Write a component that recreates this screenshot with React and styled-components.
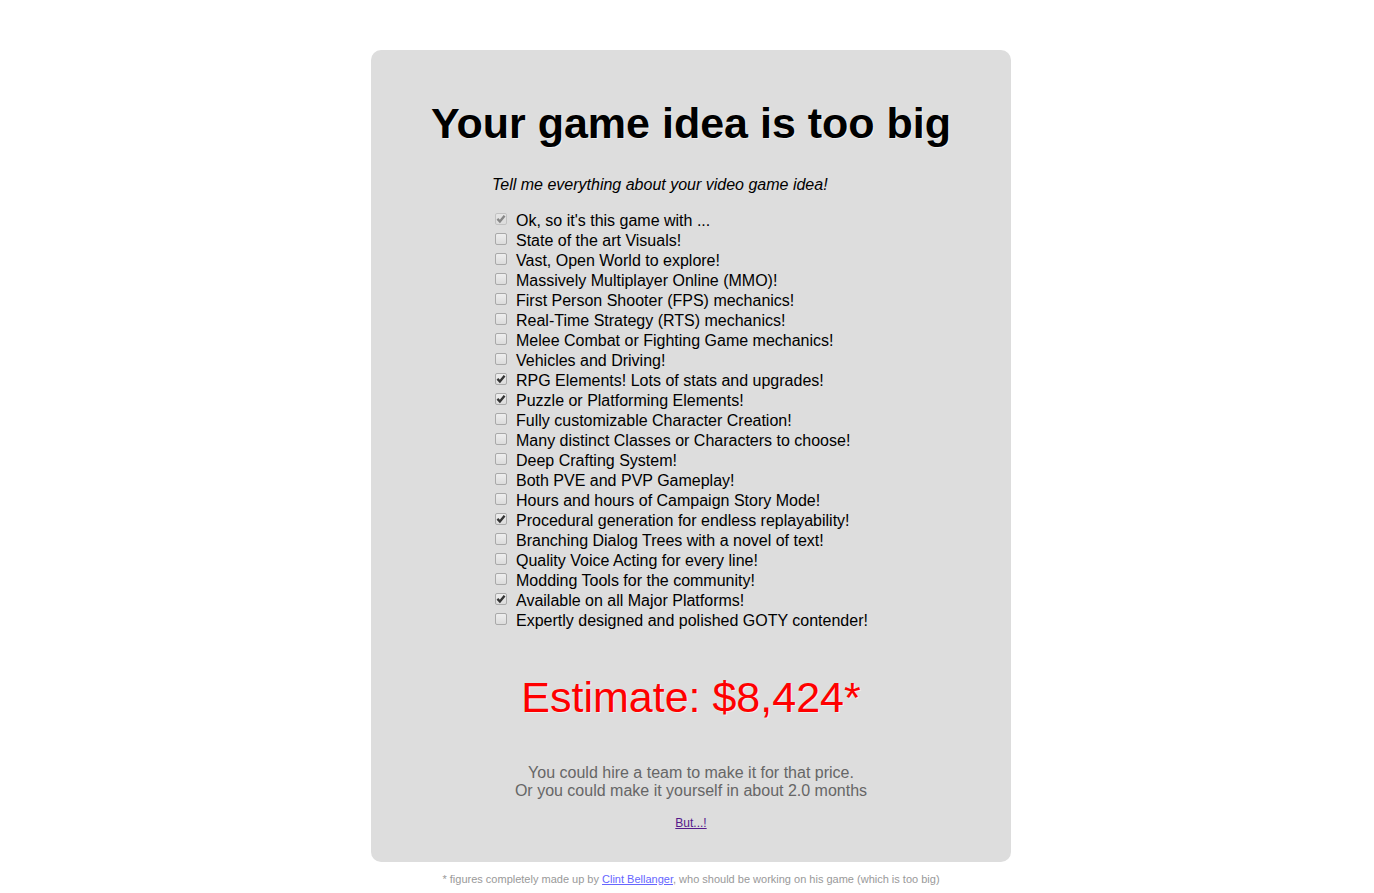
import React, { useState } from "react";
import styled, { createGlobalStyle } from "styled-components";

const features = [
  { text: "Ok, so it's this game with ...", on: true, locked: true },
  { text: "State of the art Visuals!" },
  { text: "Vast, Open World to explore!" },
  { text: "Massively Multiplayer Online (MMO)!" },
  { text: "First Person Shooter (FPS) mechanics!" },
  { text: "Real-Time Strategy (RTS) mechanics!" },
  { text: "Melee Combat or Fighting Game mechanics!" },
  { text: "Vehicles and Driving!" },
  { text: "RPG Elements! Lots of stats and upgrades!", on: true },
  { text: "Puzzle or Platforming Elements!", on: true },
  { text: "Fully customizable Character Creation!" },
  { text: "Many distinct Classes or Characters to choose!" },
  { text: "Deep Crafting System!" },
  { text: "Both PVE and PVP Gameplay!" },
  { text: "Hours and hours of Campaign Story Mode!" },
  { text: "Procedural generation for endless replayability!", on: true },
  { text: "Branching Dialog Trees with a novel of text!" },
  { text: "Quality Voice Acting for every line!" },
  { text: "Modding Tools for the community!" },
  { text: "Available on all Major Platforms!", on: true },
  { text: "Expertly designed and polished GOTY contender!" }
];

const App = () => {
  const [checked, setChecked] = useState(features.map(f => !!f.on));

  const toggle = index => {
    setChecked(checked.map((on, i) => (i === index ? !on : on)));
  };

  return (
    <Page>
      <GlobalStyle />
      <Card>
        <Title>Your game idea is too big</Title>
        <IdeaForm>
          <Intro>Tell me everything about your video game idea!</Intro>
          {features.map((feature, i) => (
            <Feature key={feature.text}>
              <Tick
                type="checkbox"
                checked={checked[i]}
                disabled={feature.locked}
                onChange={() => toggle(i)}
              />
              {feature.text}
            </Feature>
          ))}
        </IdeaForm>
        <Estimate>Estimate: $8,424*</Estimate>
        <Advice>
          You could hire a team to make it for that price.
          <br />
          Or you could make it yourself in about 2.0 months
        </Advice>
        <ButLink href="#but">But...!</ButLink>
      </Card>
      <Footnote>
        * figures completely made up by{" "}
        <AuthorLink href="#author">Clint Bellanger</AuthorLink>, who should be
        working on his game (which is too big)
      </Footnote>
    </Page>
  );
};
export default App;

const GlobalStyle = createGlobalStyle`
  body {
    margin: 0;
    background: #fff;
    color: #000;
    font-family: "Liberation Sans", Arial, sans-serif;
    font-size: 16px;
    line-height: 18px;
  }
`;

const Page = styled.div`
  display: flex;
  flex-direction: column;
  align-items: center;
  padding: 50px 0 0 8px;
`;

const Card = styled.main`
  display: flex;
  flex-direction: column;
  align-items: center;
  box-sizing: border-box;
  width: 100%;
  max-width: 640px;
  padding: 48px 20px 30px;
  background: #ddd;
  border-radius: 10px;
`;

const Title = styled.h1`
  margin: 0;
  font-size: 43px;
  line-height: 50px;
  text-shadow: 1px 1px 0 #eee;
`;

const IdeaForm = styled.form`
  width: 100%;
  max-width: 398px;
  margin-top: 28px;
`;

const Intro = styled.p`
  margin: 0 0 17px;
  font-style: italic;
`;

const Feature = styled.label`
  display: flex;
  align-items: center;
  height: 20px;
`;

const Tick = styled.input`
  appearance: none;
  box-sizing: border-box;
  flex: none;
  width: 12px;
  height: 12px;
  margin: 0 9px 4px 3px;
  border: 1px solid #a9a9a9;
  border-radius: 2px;
  background: linear-gradient(#eee, #dcdcdc);

  &:checked {
    background: url("data:image/svg+xml,%3Csvg xmlns='http://www.w3.org/2000/svg' viewBox='0 0 10 10'%3E%3Cpath d='M1.4 4.9L3.9 7.5L8.6 1.7' fill='none' stroke='%23333' stroke-width='2.3'/%3E%3C/svg%3E"),
      linear-gradient(#eee, #dcdcdc);
  }

  &:disabled {
    opacity: 0.5;
  }
`;

const Estimate = styled.p`
  margin: 41px 0 42px;
  color: #f00;
  font-size: 43px;
  line-height: 50px;
  text-shadow: 1px 1px 0 #eee;
`;

const Advice = styled.p`
  margin: 0;
  color: #666;
  text-align: center;
`;

const ButLink = styled.a`
  margin-top: 14px;
  color: #551a8b;
  font-size: 12px;
`;

const Footnote = styled.footer`
  margin-top: 8px;
  color: #999;
  font-size: 11px;
  text-align: center;
`;

const AuthorLink = styled.a`
  color: #66f;
`;
